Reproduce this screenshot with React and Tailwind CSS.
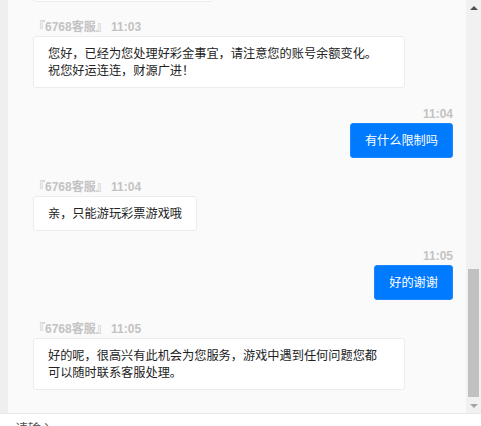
import React from "react";

const CJK = { fontFamily: '"Noto Sans CJK SC", "Liberation Sans", sans-serif' };
const LBL = { fontFamily: '"Liberation Sans", "Noto Sans CJK SC", sans-serif' };

function LeftMsg({ time, lines, w, last }) {
  return (
    <div className={"flex flex-col items-start shrink-0 " + (last ? "" : "mb-[17.5px]")}>
      <div className="h-[17px] leading-[17px] text-[12px] font-bold text-[#c3c3c3] whitespace-nowrap" style={LBL}>
        『6768客服』 {time}
      </div>
      <div
        className={"bg-white border border-[#ececec] rounded-[3px] px-[14px] py-[8px] text-[12.2px] leading-[17px] text-[#222] max-w-[372px] " + (w || "")}
        style={CJK}
      >
        {lines.map((l, i) => (
          <div key={i}>{l}</div>
        ))}
      </div>
    </div>
  );
}

function RightMsg({ time, text }) {
  return (
    <div className="flex flex-col items-end shrink-0 mb-[21px]">
      <div className="h-[17px] leading-[17px] text-[12px] font-bold text-[#c3c3c3]" style={LBL}>
        {time}
      </div>
      <div
        className="bg-[#007aff] border border-[#1a86ff] rounded-[3px] px-[14px] py-[8px] text-[12.2px] leading-[17px] text-white"
        style={CJK}
      >
        {text}
      </div>
    </div>
  );
}

export default function App() {
  return (
    <div className="w-[481px] h-[426px] flex flex-col bg-white overflow-hidden">
      <div className="flex h-[413px] shrink-0">
        <div className="w-[8px] bg-[#efefef]" />
        <div className="flex-1 bg-[#fafafa] overflow-hidden flex flex-col justify-end pl-[25px] pr-[13px] pb-[23px]">
          <div className="shrink-0 mb-[17.5px] w-[180px] h-[35px] bg-white border border-[#ececec] rounded-[3px]" />
          <LeftMsg
            time="11:03"
            w="w-[372px]"
            lines={[
              "您好，已经为您处理好彩金事宜，请注意您的账号余额变化。",
              "祝您好运连连，财源广进！",
            ]}
          />
          <RightMsg time="11:04" text="有什么限制吗" />
          <LeftMsg time="11:04" lines={["亲，只能游玩彩票游戏哦"]} />
          <RightMsg time="11:05" text="好的谢谢" />
          <LeftMsg
            time="11:05"
            last
            w="w-[372px]"
            lines={[
              "好的呢，很高兴有此机会为您服务，游戏中遇到任何问题您都",
              "可以随时联系客服处理。",
            ]}
          />
        </div>
        <div className="w-[15px] bg-[#f1f1f1] flex flex-col">
          <div className="h-[15px] flex items-center justify-center">
            <div className="w-0 h-0 border-l-[4px] border-r-[4px] border-b-[4px] border-l-transparent border-r-transparent border-b-[#505050]" />
          </div>
          <div className="flex-1 flex flex-col justify-end items-center pb-[1px]">
            <div className="w-[11px] h-[128px] bg-[#c1c1c1]" />
          </div>
          <div className="h-[15px] flex items-center justify-center">
            <div className="w-0 h-0 border-l-[4px] border-r-[4px] border-t-[4px] border-l-transparent border-r-transparent border-t-[#a3a3a3]" />
          </div>
        </div>
      </div>
      <div className="border-t border-[#e8e8e8] bg-white pl-[15px] pt-[4px] h-[60px] shrink-0">
        <div className="text-[13px] leading-[20px] text-[#555]" style={CJK}>
          请输入
        </div>
      </div>
    </div>
  );
}
